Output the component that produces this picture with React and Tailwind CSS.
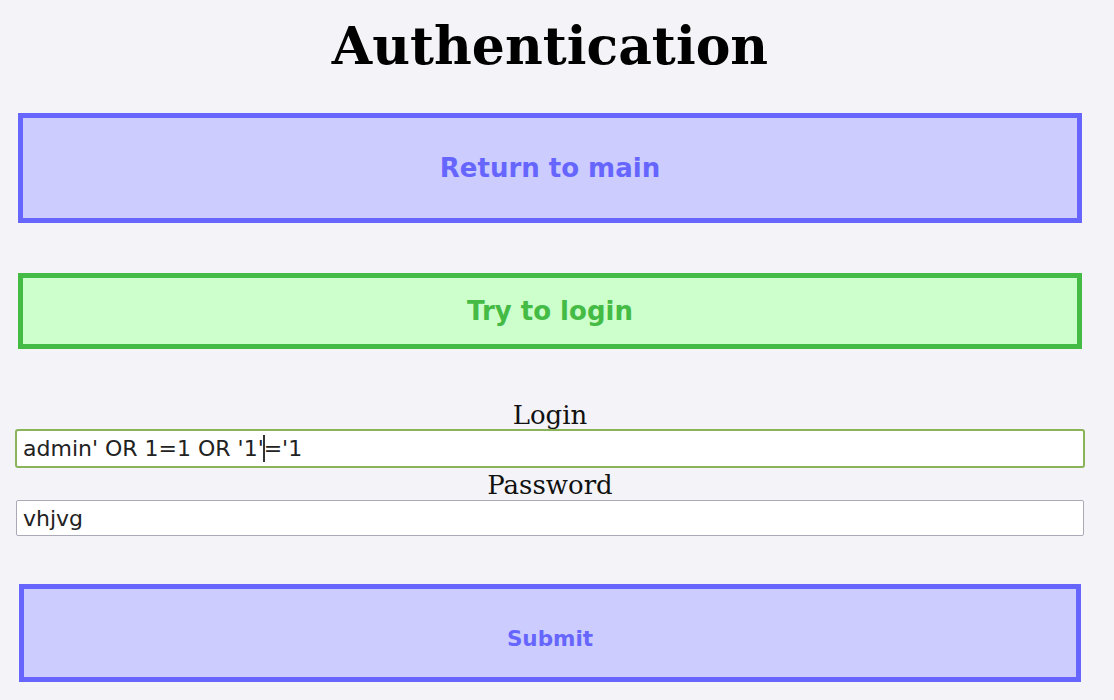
import React from "react";

const serif = { fontFamily: '"DejaVu Serif", serif' };

export default function App() {
  return (
    <div className="min-h-[700px] bg-[#f4f4f8]" style={{ fontFamily: '"DejaVu Sans", sans-serif' }}>
      <div className="w-[1100px] pt-[14px]">
        <h1 className="text-center text-[52px] leading-[64px] font-bold text-black" style={serif}>
          Authentication
        </h1>

        {/* nav buttons */}
        <button className="mt-[35px] mx-[18px] w-[1064px] h-[110px] border-[5px] border-[#6666ff] bg-[#ccccff] text-[#6666ff] text-[26px] font-bold block">
          Return to main
        </button>
        <button className="mt-[50px] mx-[18px] w-[1064px] h-[76px] border-[5px] border-[#44bb44] bg-[#ccffcc] text-[#44bb44] text-[26px] font-bold block">
          Try to login
        </button>

        {/* form */}
        <form className="mt-[52px] flex flex-col items-center" onSubmit={(e) => e.preventDefault()}>
          <label className="text-[26px] leading-[28px] text-[#111]" style={serif}>Login</label>
          <div className="mx-[15px] w-[1070px] h-[39px] border-2 border-[#8ab35a] rounded-[3px] bg-white flex items-center px-[6px] text-[22px] text-[#222] whitespace-pre">
            admin' OR 1=1 OR '1'<span className="inline-block w-[2px] h-[27px] bg-[#333] -mx-[1px]" />='1
          </div>
          <label className="mt-[2px] text-[26px] leading-[30px] text-[#111]" style={serif}>Password</label>
          <input
            type="text"
            defaultValue="vhjvg"
            className="mx-[16px] w-[1068px] h-[36px] border border-[#a9a9b8] rounded-[2px] bg-white px-[6px] text-[22px] text-[#222] outline-none"
          />
          <button
            type="submit"
            className="mt-[48px] mx-[19px] w-[1062px] h-[98px] border-[5px] border-[#6666ff] bg-[#ccccff] text-[#6666ff] text-[21.5px] font-bold pt-[12px]"
          >
            Submit
          </button>
        </form>
      </div>
    </div>
  );
}
